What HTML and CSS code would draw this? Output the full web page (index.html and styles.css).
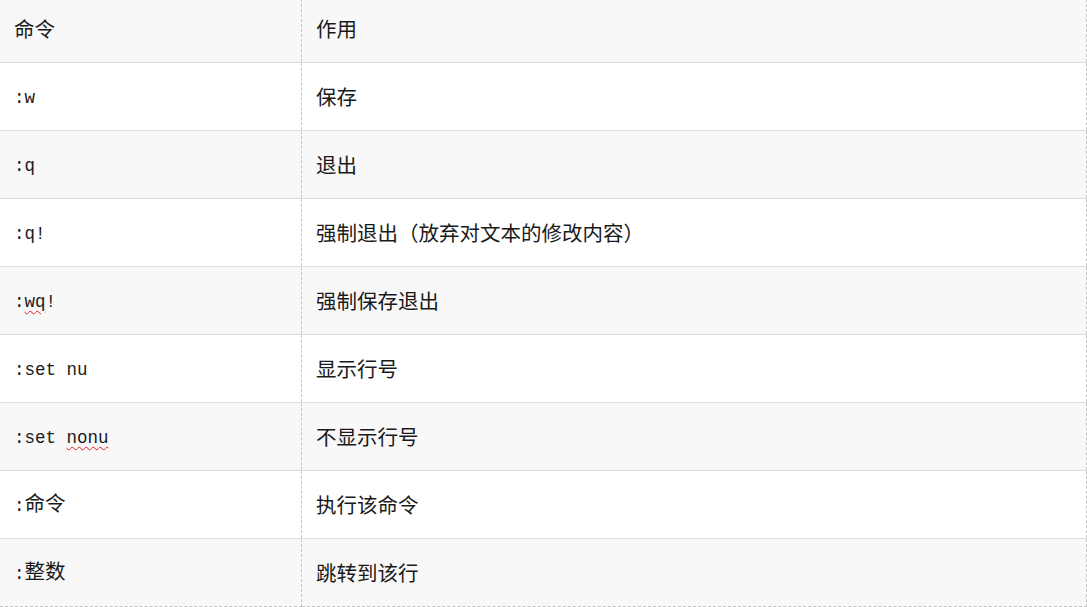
FILE: index.html
```html
<!DOCTYPE html>
<html lang="zh">
<head>
<meta charset="utf-8">
<link rel="stylesheet" href="styles.css">
</head>
<body>
<table class="cmd-table">
  <tr class="shade"><td class="c1">命令</td><td class="c2">作用</td></tr>
  <tr><td class="c1"><span class="lat">:w</span></td><td class="c2">保存</td></tr>
  <tr class="shade"><td class="c1"><span class="lat">:q</span></td><td class="c2">退出</td></tr>
  <tr><td class="c1"><span class="lat">:q!</span></td><td class="c2">强制退出（放弃对文本的修改内容）</td></tr>
  <tr class="shade"><td class="c1"><span class="lat">:<span class="spell">wq</span>!</span></td><td class="c2">强制保存退出</td></tr>
  <tr><td class="c1"><span class="lat">:set nu</span></td><td class="c2">显示行号</td></tr>
  <tr class="shade"><td class="c1"><span class="lat">:set <span class="spell">nonu</span></span></td><td class="c2">不显示行号</td></tr>
  <tr><td class="c1"><span class="lat">:</span>命令</td><td class="c2">执行该命令</td></tr>
  <tr class="shade last"><td class="c1"><span class="lat">:</span>整数</td><td class="c2">跳转到该行</td></tr>
</table>
</body>
</html>
```
FILE: styles.css
```css
html, body {
  margin: 0;
  padding: 0;
  background: #ffffff;
  overflow: hidden;
}
body {
  font-family: "Noto Sans CJK SC", "Noto Sans", sans-serif;
  color: #1a1a1a;
}
.cmd-table {
  border-collapse: collapse;
  width: 1087px;
  margin-top: -6px;
  table-layout: fixed;
  font-size: 20.5px;
}
.cmd-table tr {
  height: 68px;
  background: #ffffff;
}
.cmd-table tr.shade {
  background: #f8f8f8;
}
.cmd-table td {
  padding: 0 0 0 14px;
  border-bottom: 1px solid #dcdcdc;
  vertical-align: middle;
  line-height: 24px;
  white-space: nowrap;
}
.cmd-table tr.last td {
  border-bottom: 1px dashed #c4c4c4;
}
.cmd-table .c1 {
  width: 287px;
  border-right: 1px dashed #c4c4c4;
}
.cmd-table .c2 {
  padding-left: 14px;
  border-right: 1px dashed #c4c4c4;
}
.lat {
  font-family: "Liberation Mono", "DejaVu Sans Mono", monospace;
  font-size: 17.5px;
}
.spell {
  text-decoration: underline wavy #e02020;
  text-decoration-thickness: 1px;
  text-underline-offset: 3px;
}
```
